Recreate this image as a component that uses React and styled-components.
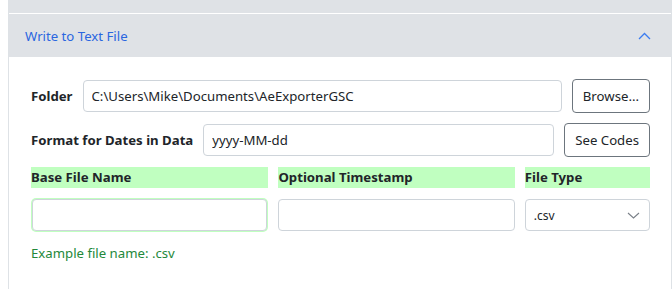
import React from "react";
import styled, { createGlobalStyle } from "styled-components";

const GlobalStyle = createGlobalStyle`
  body {
    margin: 0;
    background: #fff;
    font-family: "Noto Sans", "Open Sans", sans-serif;
    color: #212529;
  }
`;

function App() {
  return (
    <Page>
      <GlobalStyle />
      <Card>
        <PrevHeader />
        <Header>
          <HeaderTitle>Write to Text File</HeaderTitle>
          <svg width="13" height="8" viewBox="0 0 13 8">
            <path d="M1 7 L6.5 1.5 L12 7" fill="none" stroke="#3b7cf0" strokeWidth="1.3" />
          </svg>
        </Header>
        <Body>
          <Row>
            <Label>Folder</Label>
            <TextInput defaultValue="C:\Users\Mike\Documents\AeExporterGSC" />
            <Button>Browse...</Button>
          </Row>
          <Row>
            <Label>Format for Dates in Data</Label>
            <TextInput defaultValue="yyyy-MM-dd" />
            <Button>See Codes</Button>
          </Row>
          <FileGrid>
            <ColLabel>Base File Name</ColLabel>
            <ColLabel>Optional Timestamp</ColLabel>
            <ColLabel>File Type</ColLabel>
            <GridInput $highlight />
            <GridInput />
            <SelectBox>
              <span>.csv</span>
              <svg width="13" height="7" viewBox="0 0 13 7">
                <path d="M1 1 L6.5 6 L12 1" fill="none" stroke="#7a8088" strokeWidth="1.1" />
              </svg>
            </SelectBox>
          </FileGrid>
          <Example>Example file name: .csv</Example>
        </Body>
      </Card>
    </Page>
  );
}

const Page = styled.div`
  padding-left: 8px;
  width: 664px;
  height: 289px;
  overflow: hidden;
`;

const Card = styled.div`
  border-left: 1px solid #dee2e6;
  border-right: 1px solid #dee2e6;
  height: 100%;
`;

const PrevHeader = styled.div`
  height: 13px;
  background: #dfe2e6;
  border-bottom: 1px solid #fff;
`;

const Header = styled.div`
  height: 43px;
  background: #dfe2e6;
  display: flex;
  align-items: center;
  justify-content: space-between;
  padding: 0 20px 0 16px;
`;

const HeaderTitle = styled.span`
  color: #2a66e0;
  font-size: 13.2px;
`;

const Body = styled.div`
  padding: 22px 21px 0 22px;
  display: flex;
  flex-direction: column;
  gap: 10px;
`;

const Row = styled.div`
  display: flex;
  align-items: center;
  gap: 10px;
`;

const Label = styled.label`
  font-weight: 700;
  font-size: 13.2px;
  white-space: nowrap;
`;

const TextInput = styled.input`
  flex: 1;
  height: 32px;
  box-sizing: border-box;
  border: 1px solid #ced4da;
  border-radius: 4px;
  padding: 0 8px;
  font-family: inherit;
  font-size: 13.2px;
  color: #212529;
  outline: none;
`;

const Button = styled.button`
  height: 34px;
  box-sizing: border-box;
  border: 1px solid #6c757d;
  border-radius: 4px;
  background: #fff;
  padding: 0 10px;
  font-family: inherit;
  font-size: 13.2px;
  color: #212529;
`;

const FileGrid = styled.div`
  display: grid;
  grid-template-columns: 237fr 236fr 125fr;
  column-gap: 10px;
  row-gap: 11px;
`;

const ColLabel = styled.div`
  background: #c0ffc0;
  height: 21px;
  line-height: 21px;
  font-weight: 700;
  font-size: 13.2px;
`;

const GridInput = styled.input`
  height: 32px;
  box-sizing: border-box;
  border: 1px solid #ced4da;
  border-radius: 4px;
  outline: none;
  box-shadow: ${(p) => (p.$highlight ? "0 0 0 1px #c0ffc0" : "none")};
  margin: ${(p) => (p.$highlight ? "0 1px" : "0")};
`;

const SelectBox = styled.div`
  height: 32px;
  box-sizing: border-box;
  border: 1px solid #ced4da;
  border-radius: 4px;
  display: flex;
  align-items: center;
  justify-content: space-between;
  padding: 0 9px 0 8px;
  font-size: 12px;
`;

const Example = styled.div`
  margin-top: 3px;
  color: #23883a;
  font-size: 13.2px;
`;

export default App;
